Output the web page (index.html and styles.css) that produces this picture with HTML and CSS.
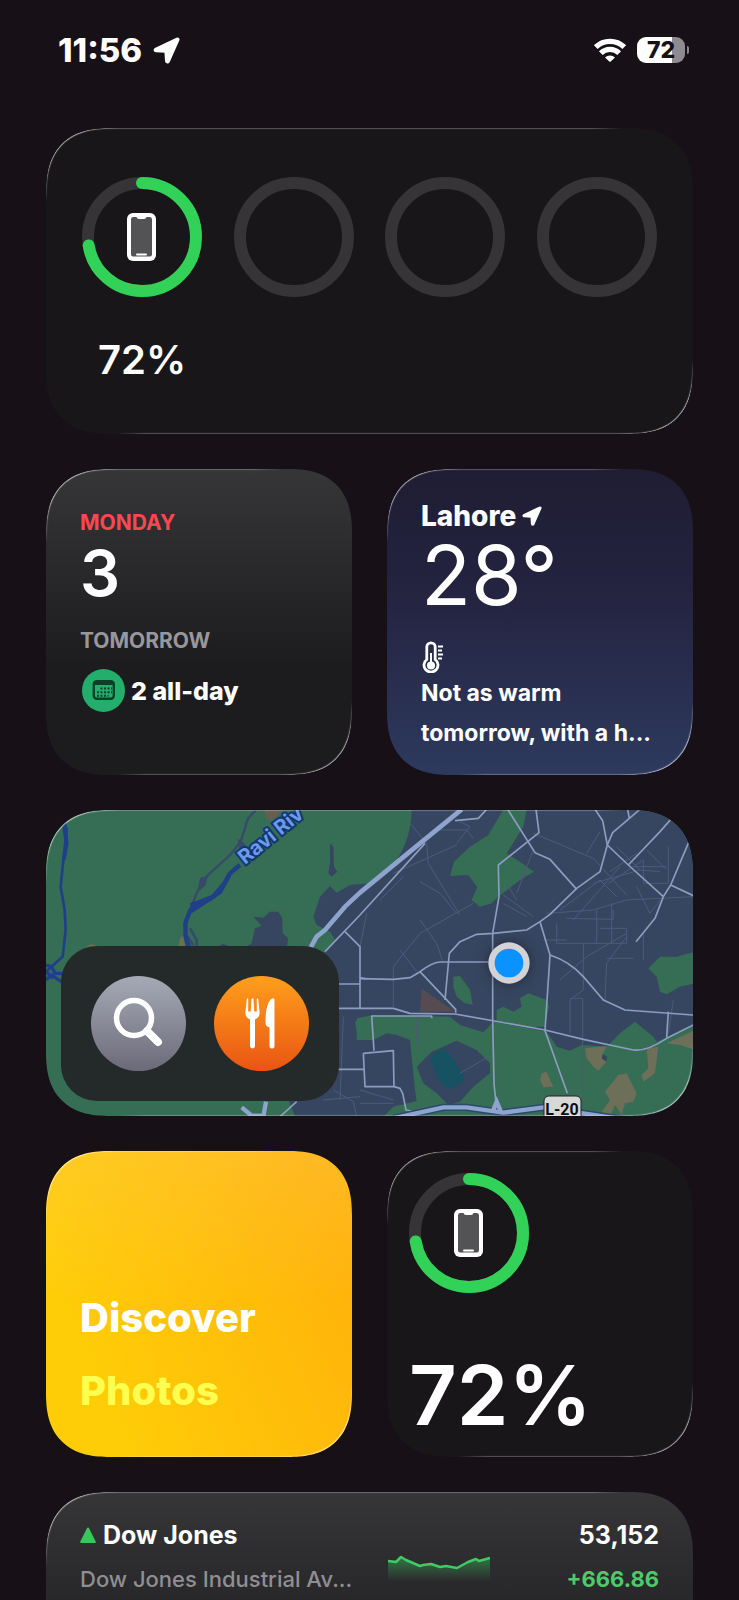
FILE: index.html
```html
<!DOCTYPE html>
<html lang="en">
<head>
<meta charset="utf-8">
<meta name="viewport" content="width=device-width, initial-scale=1">
<title>Today View</title>
<link rel="stylesheet" href="styles.css">
</head>
<body>
<svg class="defs" width="0" height="0" aria-hidden="true">
  <defs>
    <symbol id="location" viewBox="0 0 26 26">
      <path d="M22.500 1.800 2.200 11.600C1.200 12.400 1.500 13.600 2.800 13.700L12 14.200 12.600 23.300C12.800 24.900 14.600 25 15.200 23.600L24.400 3C24.900 1.800 23.600 1.100 22.500 1.800Z" fill="#fff" stroke="#fff" stroke-width="2" stroke-linejoin="round"/>
    </symbol>
    <symbol id="phone" viewBox="0 0 29 48">
      <rect width="29" height="48" rx="6" fill="#fff"/>
      <path d="M6 4H9.500Q10 6 12 6H17Q19 6 19.500 4H23Q25 4 25 6.500V41Q25 43.500 23 43.500H6Q4 43.500 4 41V6.500Q4 4 6 4Z" fill="#535254"/>
      <rect x="9" y="40.500" width="11" height="2" rx="1" fill="#fff"/>
    </symbol>
    <symbol id="ring-track" viewBox="0 0 120 120">
      <circle cx="60" cy="60" r="54" fill="none" stroke="#363437" stroke-width="12"/>
    </symbol>
    <symbol id="ring-charged" viewBox="0 0 120 120">
      <circle cx="60" cy="60" r="54" fill="none" stroke="#363437" stroke-width="12"/>
      <circle cx="60" cy="60" r="54" fill="none" stroke="#32d158" stroke-width="12" stroke-linecap="round" pathLength="100" stroke-dasharray="72.500 100" transform="rotate(-90 60 60)"/>
      <use href="#phone" x="45" y="36" width="29" height="48"/>
    </symbol>
  </defs>
</svg>

<header class="status">
  <div class="status-side">
    <time class="clock">11:56</time>
    <svg class="status-location" aria-hidden="true"><use href="#location"/></svg>
  </div>
  <div class="status-side">
    <svg class="wifi" viewBox="0 0 32 24" aria-hidden="true">
      <g fill="none" stroke="#fff" stroke-width="5.200">
        <path d="M1.800 9A20.500 20.500 0 0 1 30.200 9"/>
        <path d="M6.800 15.200A13 13 0 0 1 25.200 15.200"/>
      </g>
      <path d="M11 19.500A7.500 7.500 0 0 1 21 19.500L16.700 23.600Q16 24.200 15.300 23.600Z" fill="#fff"/>
    </svg>
    <div class="battery"><span class="battery-level">72</span></div>
  </div>
</header>

<main class="widgets">
  <section class="card card-wide batteries" aria-label="Batteries">
    <div class="device">
      <svg class="ring" aria-hidden="true"><use href="#ring-charged"/></svg>
      <span class="device-level">72%</span>
    </div>
    <div class="device"><svg class="ring" aria-hidden="true"><use href="#ring-track"/></svg></div>
    <div class="device"><svg class="ring" aria-hidden="true"><use href="#ring-track"/></svg></div>
    <div class="device"><svg class="ring" aria-hidden="true"><use href="#ring-track"/></svg></div>
  </section>

  <section class="card calendar" aria-label="Calendar">
    <div class="weekday">MONDAY</div>
    <div class="day">3</div>
    <div class="next">TOMORROW</div>
    <div class="event">
      <svg class="event-icon" viewBox="0 0 43 43" aria-hidden="true">
        <circle cx="21.500" cy="21.500" r="21.500" fill="#24ae6b"/>
        <rect x="11.800" y="12.300" width="20" height="17.500" rx="3" fill="none" stroke="#0c3f28" stroke-width="2.400"/>
        <path d="M11.500 14.500H32" stroke="#0c3f28" stroke-width="3"/>
        <path d="M18.500 19.500H30M15 23.200H30M15 26.800H26.500" stroke="#0c3f28" stroke-width="2" stroke-dasharray="2 1.500"/>
      </svg>
      <span>2 all-day</span>
    </div>
  </section>

  <section class="card weather" aria-label="Weather">
    <div class="city">Lahore <svg class="city-icon" aria-hidden="true"><use href="#location"/></svg></div>
    <div class="temperature">28°</div>
    <svg class="thermometer" viewBox="0 0 24 32" aria-hidden="true">
      <path d="M5.800 18.500V6A4.200 4.200 0 0 1 14.200 6V18.500A7 7 0 1 1 5.800 18.500Z" fill="none" stroke="#fff" stroke-width="2.800"/>
      <circle cx="10" cy="24.500" r="4" fill="#fff"/>
      <path d="M10 12V24" stroke="#fff" stroke-width="2"/>
      <path d="M17 5.500H22M17 9.500H21M17 13.500H22M17 17.500H21" stroke="#fff" stroke-width="2"/>
    </svg>
    <p class="forecast">Not as warm<br>tomorrow, with a h...</p>
  </section>

  <section class="card card-wide map" aria-label="Maps">
    <svg class="map-canvas" viewBox="0 0 647 306" preserveAspectRatio="xMidYMid slice" aria-hidden="true">
      <rect width="647" height="306" fill="#366d55"/>
      <g transform="translate(-16 -10) scale(.33333)">
        <path d="M1145 20Q1146 110 1100 180Q1070 230 1020 250L960 255 920 278 900 258 870 290 850 350 860 375 900 395 915 420 880 460 780 600 775 900 800 960H2000V20Z" fill="#374660"/>
        <path d="M900 130 910 140 912 200 922 215 905 230 895 220 900 190Z" fill="#374660"/>
        <path d="M670 350 700 353 720 335 745 335 757 355 758 400 775 415 770 445H640L665 430 675 385 695 378Z" fill="#374660"/>
        <path d="M560 440 580 432 600 440Z" fill="#374660"/>
        <path d="M705 30H755L740 50 722 62 706 50Z" fill="#665f50"/>
        <path d="M165 440 185 432 205 440ZM445 440 450 415 460 407 465 440Z" fill="#6d6f51"/>
        <path d="M678 32Q650 50 645 85L632 125 600 165 545 215 520 240 500 280 480 330" fill="none" stroke="#374a69" stroke-width="7"/>
        <path d="M625 120 640 130 650 145 630 150ZM512 235 530 230 525 255 505 272Z" fill="#374a69" stroke="#374a69" stroke-width="4"/>
        <path d="M480 385 500 420 500 440M465 400 490 435" fill="none" stroke="#374a69" stroke-width="8"/>
        <path d="M103 65 110 90 100 180 92 260 104 330 107 390 98 470 70 495 48 515" fill="none" stroke="#1f4089" stroke-width="8"/>
        <path d="M102 75 110 130 101 180" fill="none" stroke="#1f4089" stroke-width="12"/>
        <path d="M48 495 65 500 75 520 98 520M48 540 65 525 98 548M48 515 70 535" fill="none" stroke="#1f4089" stroke-width="10"/>
        <path d="M630 195 600 220 570 275 540 297 480 332 466 370 467 410 476 440" fill="none" stroke="#1f3f86" stroke-width="13" stroke-linejoin="round"/>
        <path d="M610 205 600 235 575 280 545 300 485 340 480 310 545 285 575 250Z" fill="#1f3f86"/>
        <path d="M878 420 895 398 910 410 900 440 880 460 860 450Z" fill="#366d55"/>
        <path d="M975 665 995 655 1020 670V720L985 718Z" fill="#366d55"/>
      </g>
      <g transform="translate(314 -10) scale(.33333)">
        <g fill="#366d55">
          <path d="M430 28H500L490 80 440 160 475 182 522 215 480 240 415 290 395 310 360 320 335 300 352 262 325 225 270 228 282 185 330 140 385 105Z"/>
          <path d="M280 530 300 528 330 570 338 614 315 610 290 590 280 560Z"/>
          <path d="M410 630 430 620 460 635 485 620 480 595 505 580 560 600 567 620 555 680 500 682 410 665Z"/>
          <path d="M1005 455 950 470 900 470 865 505 890 530 900 575 920 583 960 560 1005 550Z"/>
          <path d="M-10 655 40 645 270 650 300 675 370 697 400 665 560 695 590 740 630 752 665 735 740 740 780 700 825 665 880 710 890 725 1005 675V960H60L100 920 170 903 165 870 150 720 110 705 80 700 40 720-10 720Z"/>
        </g>
        <path d="M170 800 215 755 290 722 350 750 390 790 390 820 340 860 300 905 265 915 230 880 190 850Z" fill="#374660"/>
        <path d="M210 780 225 758 250 745 275 768 313 830 305 850 265 868 235 840Z" fill="#175263"/>
        <path d="M185 565 285 635H180Z" fill="#554b51"/>
        <g fill="#6d6f58">
          <path d="M675 745 740 738 725 770 740 785 715 812 700 800 680 775Z"/>
          <path d="M860 745 895 740 885 820 850 845 845 825 865 805Z"/>
          <path d="M920 730 1005 690V750L960 735Z"/>
          <path d="M735 875 775 825 800 820 830 880 820 905 795 910 785 945 765 915 750 950 725 935 750 900Z"/>
          <path d="M545 820 560 815 580 860 550 862 540 840Z"/>
        </g>
        <path d="M728 762 742 770 738 785 725 775Z" fill="#374660"/>
        <g fill="none" stroke="#4c5b78" stroke-width="3">
          <path d="M150 70 200 130 205 190 300 345M180 245 240 280 290 340M100 220 290 135M60 300 130 230M100 620V500L180 400 340 310M120 450 170 515M180 360 230 430 250 490M20 340 0 440"/>
          <path d="M230 90H320L340 115M300 65 330 80 290 130M520 100 700 175 800 285M720 95 680 160M430 285 520 350M430 310 500 350M560 340 700 330 800 300 1000 290M620 355 760 358V330M600 330 720 240 770 290M780 200 640 360M700 250 840 210 900 215"/>
          <path d="M720 385H800V430H590V370M670 430V570L630 600V700M630 595H668V900M735 600 740 490 800 410M740 475H820M600 540 680 470 800 400M850 400V480M710 330V430M755 310V430M850 180V250H925V140M860 150 920 210M820 200H920M830 260 870 340 900 300M940 600 925 700M480 240 500 200M550 420 620 420M440 250 470 300"/>
          <path d="M300 820 385 770M0 910H100M170 650V740M0 870 100 900M520 150 470 280M770 140 840 210M750 215 830 160M745 250 850 180"/>
          <path d="M-80 870-20 905-10 950M-110 900 0 890M-50 650-60 900"/>
        </g>
        <g fill="none" stroke="#8d9cbf" stroke-width="5" stroke-linejoin="round">
          <path d="M195 130 0 345-105 455M285 62 355 55 380 28M443 28 525 158 570 178 650 268M528 28 537 98 415 195 417 290 398 400V660L402 850 410 930"/>
          <path d="M705 28 728 62 742 135 720 215 650 265 570 343 540 365 500 390 400 400 350 403 300 425 268 460 255 600"/>
          <path d="M742 135 805 195 910 290 885 355 828 425M742 135 758 98 840 28M803 28 808 55M805 195 900 95 935 55M987 125 932 255 910 290M932 255 1000 287"/>
          <path d="M385 486H240Q215 488 180 515L150 533 100 538 0 536M180 515 287 628V638M540 365 570 465 555 692 622 880M570 465Q630 485 670 530L730 600 795 630 1000 645"/>
          <path d="M-65 625H100L150 640 285 642 555 690 670 718 820 750Q860 755 920 715L1000 675M925 635 920 712M215 655V648H35L42 752M10 760 100 752 102 860H15L10 760M-65 808H10M102 860 120 865 128 880 138 930 160 935"/>
          <path d="M-45 395 0 440V625M0 533 20 537M-65 552H0M-190 905-240 950"/>
        </g>
        <path d="M305 28 180 130 0 278-45 320-105 390-130 410-148 442" fill="none" stroke="#8fa3cf" stroke-width="14" stroke-linejoin="round"/>
        <path d="M100 955 250 922 320 922 430 938 550 922 700 945 790 958" fill="none" stroke="#29496d" stroke-width="22"/>
        <path d="M100 955 250 922 320 922 430 938 550 922 700 945 790 958M-355 922-325 947H-285M-282 905-290 950M398 935 410 905 425 940" fill="none" stroke="#8fa3cf" stroke-width="13"/>
        <g class="dot">
          <circle cx="447" cy="489" r="62" fill="#d3d2d7"/>
          <circle cx="447" cy="489" r="43" fill="#0a92ff"/>
        </g>
      </g>
      <text class="river" x="0" y="0" transform="translate(199 55) rotate(-39)">Ravi Riv</text>
      <rect x="498" y="286" width="37" height="30" rx="5" fill="#d7d9d6" stroke="#20252a" stroke-width="1"/>
      <text class="shield" x="516" y="305" text-anchor="middle">L-20</text>
    </svg>
    <div class="map-actions">
      <button class="round round-search" type="button" aria-label="Search">
        <svg viewBox="0 0 95 95" aria-hidden="true">
          <circle cx="43" cy="42" r="17.500" fill="none" stroke="#fff" stroke-width="5.500"/>
          <path d="M56 55 67 66" stroke="#fff" stroke-width="8" stroke-linecap="round"/>
        </svg>
      </button>
      <button class="round round-food" type="button" aria-label="Restaurants">
        <svg viewBox="0 0 95 95" aria-hidden="true">
          <path d="M31.300 37 32.800 23Q33.500 21.500 34.200 23V35.500H36.700L37.500 23Q38.500 21.500 39.500 23L40.300 35.500H42.800V23Q43.500 21.500 44.200 23L45.700 37Q45.700 41 41 43.500V70A2.500 2.500 0 0 1 36 70V43.500Q31.300 41 31.300 37Z" fill="#fff"/>
          <path d="M60.500 24Q60.500 21.500 58 22.500C53 26 51.500 36 51.500 47Q51.500 50.500 55.500 51.500V70A2.500 2.500 0 0 0 60.500 70Z" fill="#fff"/>
        </svg>
      </button>
    </div>
  </section>

  <a class="card discover" href="#photos">
    <span>Discover</span>
    <span class="discover-name">Photos</span>
  </a>

  <section class="card battery-card" aria-label="Battery">
    <svg class="ring" aria-hidden="true"><use href="#ring-charged"/></svg>
    <span class="battery-percent">72%</span>
  </section>

  <section class="card card-wide stocks" aria-label="Stocks">
    <div class="stock">
      <div class="stock-name">
        <svg class="stock-up" viewBox="0 0 16 16" aria-hidden="true"><path d="M8 1.500 14.800 15H1.200Z" fill="#35c85a" stroke="#35c85a" stroke-width="2" stroke-linejoin="round"/></svg>
        <span>Dow Jones</span>
      </div>
      <svg class="spark" viewBox="0 0 102 74" aria-hidden="true">
        <defs><linearGradient id="spark-fill" x1="0" y1="0" x2="0" y2="1"><stop stop-color="#34a853" stop-opacity=".6"/><stop offset="1" stop-color="#34a853" stop-opacity="0"/></linearGradient></defs>
        <path d="M0 41 8 42 13 37 18 40 25 43 34 46 43 44 52 47 58 46 69 48 80 42 88 39 91 41 102 38V61H0Z" fill="url(#spark-fill)"/>
        <path d="M0 41 8 42 13 37 18 40 25 43 32 46 35 45 43 44 52 47 58 46 69 48 80 42 88 39 91 41 102 38" fill="none" stroke="#3fcc65" stroke-width="2.500" stroke-linejoin="round"/>
      </svg>
      <div class="stock-price">53,152</div>
      <div class="stock-detail">Dow Jones Industrial Av...</div>
      <div class="stock-change">+666.86</div>
    </div>
  </section>
</main>
</body>
</html>
```
FILE: styles.css
```css
* {
  box-sizing: border-box;
}

body {
  margin: 0;
  height: 100vh;
  overflow: hidden;
  padding: 0 46px;
  background: #171017;
  color: #fff;
  font-family: Inter, "Liberation Sans", sans-serif;
}

.defs {
  position: absolute;
}

/* Status bar */

.status {
  display: flex;
  justify-content: space-between;
  align-items: center;
  padding: 30px 4px 58px 12px;
}

.status-side {
  display: flex;
  align-items: center;
  gap: 11px;
}

.clock {
  font-size: 33px;
  font-weight: 800;
  line-height: 40px;
}

.status-location {
  width: 27px;
  height: 27px;
}

.wifi {
  width: 32px;
  height: 24px;
}

.battery {
  display: flex;
  align-items: center;
  gap: 2px;
}

.battery::after {
  content: "";
  width: 2px;
  height: 8px;
  border-radius: 0 3px 3px 0;
  background: #8a868b;
}

.battery-level {
  width: 48px;
  border-radius: 9px;
  background: linear-gradient(to right, #fff 72%, #8f8a90 72%);
  color: #171017;
  font-size: 23px;
  font-weight: 800;
  line-height: 26px;
  text-align: center;
}

/* Widget grid */

.widgets {
  display: grid;
  grid-template-columns: 1fr 1fr;
  gap: 35px;
}

.card {
  position: relative;
  display: flex;
  flex-direction: column;
  min-height: 306px;
  border-radius: 52px;
  overflow: hidden;
  background: #181619;
}

.card-wide {
  grid-column: 1 / -1;
}

/* Light catching the top-left and bottom-right edges */
.card::after {
  content: "";
  position: absolute;
  inset: 0;
  border-radius: inherit;
  box-shadow: inset 0 0 1px 1px #fffc;
  mask:
    radial-gradient(circle at 16px 16px, #000c 20px, #0000 60px),
    radial-gradient(circle at calc(100% - 16px) calc(100% - 16px), #000c 20px, #0000 60px),
    linear-gradient(to right, #0000 30px, #0005 60px, #0005 calc(100% - 100px), #0000 calc(100% - 70px)) top / 100% 12px no-repeat,
    linear-gradient(to left, #0000 30px, #0005 60px, #0005 calc(100% - 100px), #0000 calc(100% - 70px)) bottom / 100% 12px no-repeat;
  pointer-events: none;
}

@supports (corner-shape: superellipse(1.3)) {
  .card,
  .card::after {
    border-radius: 64px;
    corner-shape: superellipse(1.3);
  }
}

.ring {
  width: 120px;
  height: 120px;
}

/* Batteries */

.batteries {
  flex-direction: row;
  justify-content: space-between;
  padding: 49px 36px;
}

.device {
  display: flex;
  flex-direction: column;
  align-items: center;
  gap: 38px;
}

.device-level {
  font-size: 40px;
  font-weight: 600;
  line-height: 50px;
}

/* Calendar */

.calendar {
  padding: 42px 34px;
  background: linear-gradient(#363638, #1c1c1e 65%);
}

.weekday,
.next {
  font-size: 21px;
  font-weight: 700;
  line-height: 24px;
}

.weekday {
  color: #fb4850;
}

.day {
  margin: 6px 0 24px;
  font-size: 63px;
  font-weight: 600;
  line-height: 64px;
}

.next {
  color: #98979c;
}

.event {
  display: flex;
  align-items: center;
  gap: 6px;
  margin-top: 16px;
  padding-left: 2px;
  font-size: 25px;
  font-weight: 800;
}

.event-icon {
  width: 43px;
  height: 43px;
}

/* Weather */

.weather {
  padding: 31px 34px 22px;
  background: linear-gradient(#1f1d33, #242340 40%, #2d3a5e);
}

.city {
  display: flex;
  align-items: center;
  gap: 6px;
  font-size: 28px;
  font-weight: 800;
  line-height: 32px;
}

.city-icon {
  width: 20px;
  height: 20px;
}

.temperature {
  margin: 8px 0 29px;
  font-size: 82px;
  font-weight: 400;
  line-height: 72px;
}

.thermometer {
  width: 24px;
  height: 32px;
}

.forecast {
  margin: 0;
  font-size: 23px;
  font-weight: 700;
  line-height: 40px;
  white-space: nowrap;
}

/* Maps */

.map {
  justify-content: flex-end;
  align-items: flex-start;
  padding: 15px;
}

.map-canvas {
  position: absolute;
  inset: 0;
  width: 100%;
  height: 100%;
}

.dot {
  filter: drop-shadow(0 0 20px #0006);
}

.river {
  font-size: 20px;
  font-weight: 700;
  fill: #6a9bea;
  stroke: #14366f;
  stroke-width: 4px;
  paint-order: stroke;
}

.shield {
  font-family: "Liberation Sans Narrow", Roboto, sans-serif;
  font-size: 16px;
  font-weight: 700;
  fill: #0b0d10;
}

.map-actions {
  position: relative;
  display: flex;
  gap: 28px;
  padding: 30px;
  border-radius: 36px;
  background: #242a2a;
}

.round {
  width: 95px;
  height: 95px;
  padding: 0;
  border: 0;
  border-radius: 50%;
}

.round svg {
  display: block;
}

.round-search {
  background: linear-gradient(#a5aab6, #6c6a79);
}

.round-food {
  background: linear-gradient(#ff9f1c, #e95513);
}

/* Photos */

.discover {
  justify-content: flex-end;
  padding: 30px 34px;
  background:
    linear-gradient(#ffffff1a, #fff0 50%),
    linear-gradient(65deg, #ffcc08 20%, #ffb20a 90%);
  color: #fff;
  font-size: 40px;
  font-weight: 800;
  line-height: 73px;
  text-decoration: none;
}

.discover-name {
  color: #ffff50;
}

/* Single battery */

.battery-card {
  justify-content: space-between;
  padding: 22px 22px 20px;
}

.battery-percent {
  font-size: 83px;
  font-weight: 600;
  line-height: 84px;
}

/* Stocks */

.stocks {
  padding: 28px 34px;
  background: linear-gradient(#363638, #1c1c1e 65%);
}

.stock {
  display: grid;
  grid-template-columns: minmax(0, 1fr) 102px 169px;
  grid-template-rows: 30px 30px;
  row-gap: 14px;
  line-height: 30px;
  white-space: nowrap;
}

.stock-name {
  display: flex;
  align-items: center;
  gap: 7px;
}

.stock-up {
  width: 16px;
  height: 16px;
}

.stock-name,
.stock-price {
  font-size: 25px;
  font-weight: 700;
}

.stock-price,
.stock-change {
  text-align: right;
}

.spark {
  grid-row: 1 / 3;
  grid-column: 2;
  width: 102px;
  height: 74px;
}

.stock-detail,
.stock-change {
  font-size: 22px;
}

.stock-detail {
  color: #8f8f93;
  font-weight: 500;
}

.stock-change {
  grid-column: 3;
  color: #4ccb6c;
  font-weight: 700;
}
```
